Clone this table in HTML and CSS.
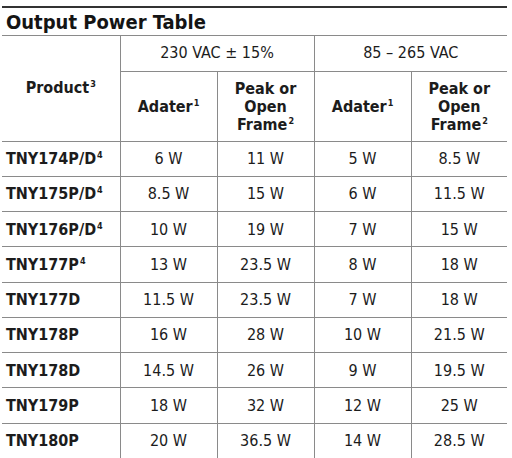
FILE: index.html
```html
<!DOCTYPE html>
<html>
<head>
<meta charset="utf-8">
<link rel="stylesheet" href="styles.css">
</head>
<body>
<div class="wrap">
  <h1 class="title">Output Power Table</h1>
  <table class="power">
    <colgroup>
      <col class="c-prod"><col class="c-val"><col class="c-val"><col class="c-val"><col class="c-last">
    </colgroup>
    <thead>
      <tr class="h1">
        <th rowspan="2" class="prod-h">Product<sup>3</sup></th>
        <th colspan="2" class="grp">230 VAC ± 15%</th>
        <th colspan="2" class="grp">85 – 265 VAC</th>
      </tr>
      <tr class="h2">
        <th>Adater<sup>1</sup></th>
        <th>Peak or<br>Open<br>Frame<sup>2</sup></th>
        <th>Adater<sup>1</sup></th>
        <th>Peak or<br>Open<br>Frame<sup>2</sup></th>
      </tr>
    </thead>
    <tbody>
      <tr><td class="p">TNY174P/D<sup>4</sup></td><td>6 W</td><td>11 W</td><td>5 W</td><td>8.5 W</td></tr>
      <tr><td class="p">TNY175P/D<sup>4</sup></td><td>8.5 W</td><td>15 W</td><td>6 W</td><td>11.5 W</td></tr>
      <tr><td class="p">TNY176P/D<sup>4</sup></td><td>10 W</td><td>19 W</td><td>7 W</td><td>15 W</td></tr>
      <tr><td class="p">TNY177P<sup>4</sup></td><td>13 W</td><td>23.5 W</td><td>8 W</td><td>18 W</td></tr>
      <tr><td class="p">TNY177D</td><td>11.5 W</td><td>23.5 W</td><td>7 W</td><td>18 W</td></tr>
      <tr><td class="p">TNY178P</td><td>16 W</td><td>28 W</td><td>10 W</td><td>21.5 W</td></tr>
      <tr><td class="p">TNY178D</td><td>14.5 W</td><td>26 W</td><td>9 W</td><td>19.5 W</td></tr>
      <tr><td class="p">TNY179P</td><td>18 W</td><td>32 W</td><td>12 W</td><td>25 W</td></tr>
      <tr><td class="p">TNY180P</td><td>20 W</td><td>36.5 W</td><td>14 W</td><td>28.5 W</td></tr>
    </tbody>
  </table>
</div>
</body>
</html>
```
FILE: styles.css
```css
html, body {
  margin: 0;
  padding: 0;
  background: #ffffff;
}
body {
  font-family: "DejaVu Sans Condensed", "DejaVu Sans", sans-serif;
  color: #1c1c1c;
}
.wrap {
  margin: 6px 0 0 2px;
  width: 505px;
}
.title {
  margin: 0;
  border-top: 2px solid #333333;
  border-bottom: 1px solid #8a8a8a;
  height: 26px;
  padding: 1px 0 0 4px;
  font-size: 20px;
  font-weight: bold;
  line-height: 26px;
  color: #141414;
}
.power {
  width: 505px;
  border-collapse: collapse;
  table-layout: fixed;
  font-size: 16px;
}
.c-prod { width: 118px; }
.c-val { width: 97px; }
.c-last { width: 96px; }
.power th, .power td {
  border-bottom: 1px solid #8a8a8a;
  border-left: 1px solid #8a8a8a;
  padding: 0;
  text-align: center;
  vertical-align: middle;
}
.power tr > :first-child { border-left: none; }
.power tr.h2 > :first-child { border-left: 1px solid #8a8a8a; }
.power th {
  font-weight: bold;
  line-height: 18px;
}
.power th.grp {
  font-weight: normal;
}
.h1 { height: 35px; }
.h2 { height: 70px; }
.h2 th { padding-top: 1px; }
.power tbody tr { height: 35.25px; }
.power tbody tr:last-child td { border-bottom: none; }
.power td.p {
  text-align: left;
  padding-left: 4px;
  font-weight: bold;
}
sup {
  font-size: 9px;
  line-height: 0;
  vertical-align: baseline;
  position: relative;
  top: -6px;
  font-weight: bold;
  margin-left: 1px;
}
```
